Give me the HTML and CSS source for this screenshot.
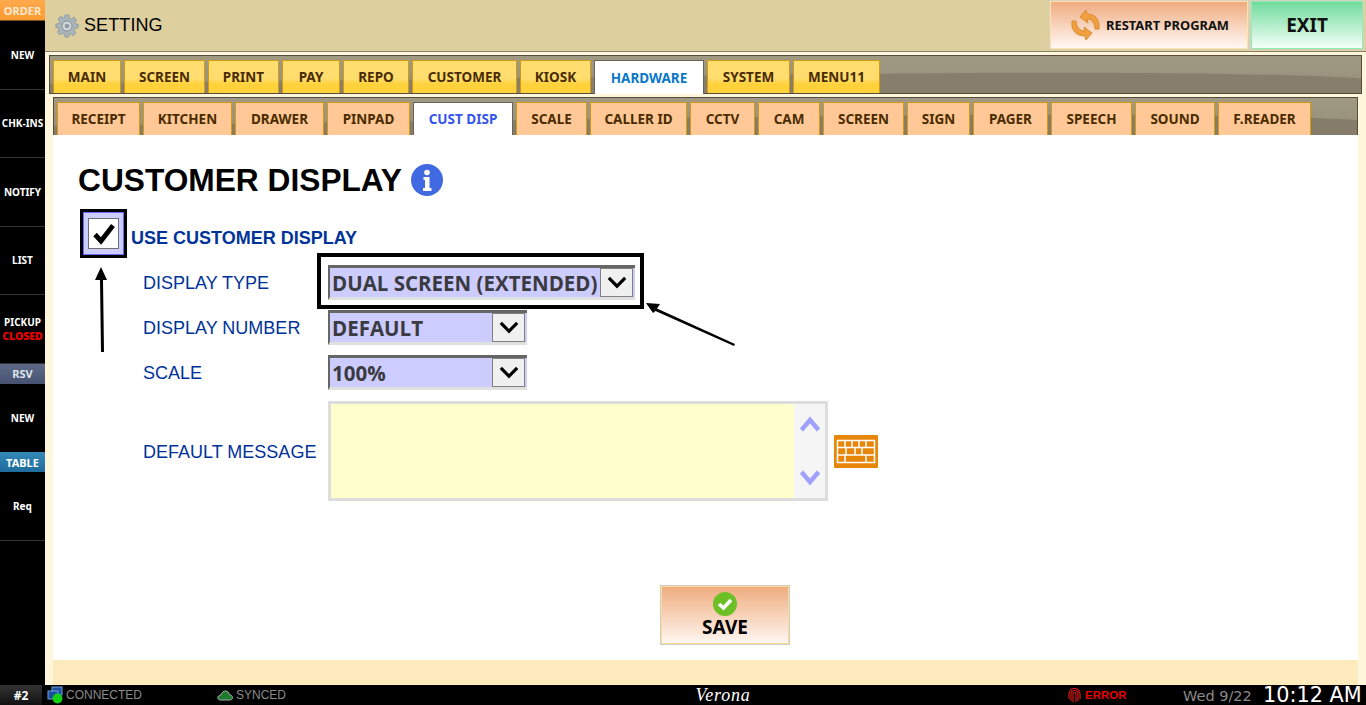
FILE: index.html
```html
<!DOCTYPE html>
<html lang="en">
<head>
<meta charset="utf-8">
<title>Setting</title>
<link rel="stylesheet" href="styles.css">
</head>
<body>
<div class="app">
  <aside class="side">
    <div class="side-head order">ORDER</div>
    <div class="side-item">NEW</div>
    <div class="side-item">CHK-INS</div>
    <div class="side-item">NOTIFY</div>
    <div class="side-item">LIST</div>
    <div class="side-item"><span>PICKUP<br><b class="closed">CLOSED</b></span></div>
    <div class="side-head rsv">RSV</div>
    <div class="side-item plain">NEW</div>
    <div class="side-head table">TABLE</div>
    <div class="side-item">Req</div>
  </aside>
  <main class="main">
    <header class="top">
      <svg class="gear" width="24" height="24" viewBox="0 0 26 26"><path fill="#a9b4bb" stroke="#8f9aa1" d="M11 1h4l.6 3.2 2.3 1 2.8-1.8 2.8 2.8-1.8 2.8 1 2.3L25 11v4l-3.2.6-1 2.3 1.8 2.8-2.8 2.8-2.8-1.8-2.300 1L15 25h-4l-.6-3.200-2.300-1-2.800 1.800-2.800-2.800 1.800-2.800-1-2.300L1 15v-4l3.200-.6 1-2.300L3.400 5.300 6.200 2.500 9 4.300l1.400-.1z"/><circle cx="13" cy="13" r="5.500" fill="#cfd6da" stroke="#7d888f"/><circle cx="13" cy="13" r="2.500" fill="#8f9aa1"/></svg>
      <h1 class="title">SETTING</h1>
      <button class="restart">
        <svg width="30" height="32" viewBox="0 0 30 32"><path fill="#f0a040" stroke="#d98a30" d="M9 8 L15 1 L16 5 C22 5 27 8 28 15 L28 20 L24 20 C24 14 21 10 16 10 L17 14z"/><path fill="#f0a040" stroke="#d98a30" d="M21 24 L15 31 L14 27 C8 27 2 24 1 17 L1 12 L5 12 C5 18 9 22 14 22 L13 18z"/></svg>
        <span>RESTART PROGRAM</span>
      </button>
      <button class="exit">EXIT</button>
    </header>
    <div class="frame">
      <nav class="tabs tabs-main">
        <svg class="wave" viewBox="0 0 1000 40" preserveAspectRatio="none"><path fill="#877f6c" d="M0 40V30C300 26 600 18 770 18C870 18 950 20 1000 24V40z"/></svg>
        <a class="tab">MAIN</a><a class="tab">SCREEN</a><a class="tab">PRINT</a><a class="tab">PAY</a><a class="tab">REPO</a><a class="tab">CUSTOMER</a><a class="tab">KIOSK</a><a class="tab on">HARDWARE</a><a class="tab">SYSTEM</a><a class="tab">MENU11</a>
      </nav>
      <div class="inner">
        <nav class="tabs tabs-sub">
          <svg class="wave" viewBox="0 0 1000 40" preserveAspectRatio="none"><path fill="#857d69" d="M0 40V30C300 26 600 18 770 18C870 18 950 20 1000 24V40z"/></svg>
          <a class="sub">RECEIPT</a><a class="sub">KITCHEN</a><a class="sub">DRAWER</a><a class="sub">PINPAD</a><a class="sub on">CUST DISP</a><a class="sub">SCALE</a><a class="sub">CALLER ID</a><a class="sub">CCTV</a><a class="sub">CAM</a><a class="sub">SCREEN</a><a class="sub">SIGN</a><a class="sub">PAGER</a><a class="sub">SPEECH</a><a class="sub">SOUND</a><a class="sub">F.READER</a>
        </nav>
        <section class="panel">
          <h2 class="heading">CUSTOMER DISPLAY
            <svg class="info" width="32" height="32" viewBox="0 0 32 32"><circle cx="16" cy="16" r="16" fill="#4169e1"/><circle cx="16" cy="8.500" r="2.800" fill="#fff"/><path fill="#fff" d="M12.500 13h6v11h2v3h-8.500v-3h2v-8h-1.500z"/></svg>
          </h2>
          <div class="use-row">
            <div class="check-frame"><div class="check-outer"><div class="check-box">
              <svg width="24" height="22" viewBox="0 0 24 22"><path fill="none" stroke="#000" stroke-width="4.800" d="M3 11.500l6 6.500L21 2.500"/></svg>
            </div></div></div>
            <span class="use-label">USE CUSTOMER DISPLAY</span>
          </div>
          <div class="field first">
            <label class="field-label">DISPLAY TYPE</label>
            <div class="select wide"><span class="select-text">DUAL SCREEN (EXTENDED)</span><span class="select-btn"><svg width="20" height="13" viewBox="0 0 22 14"><path fill="none" stroke="#000" stroke-width="3.500" d="M2 2l9 9 9-9"/></svg></span></div>
          </div>
          <div class="field">
            <label class="field-label">DISPLAY NUMBER</label>
            <div class="select"><span class="select-text">DEFAULT</span><span class="select-btn"><svg width="20" height="13" viewBox="0 0 22 14"><path fill="none" stroke="#000" stroke-width="3.500" d="M2 2l9 9 9-9"/></svg></span></div>
          </div>
          <div class="field">
            <label class="field-label">SCALE</label>
            <div class="select"><span class="select-text">100%</span><span class="select-btn"><svg width="20" height="13" viewBox="0 0 22 14"><path fill="none" stroke="#000" stroke-width="3.500" d="M2 2l9 9 9-9"/></svg></span></div>
          </div>
          <div class="field message">
            <label class="field-label">DEFAULT MESSAGE</label>
            <div class="textarea">
              <div class="text-fill"></div>
              <div class="scroll">
                <svg width="20" height="16" viewBox="0 0 20 16"><path fill="none" stroke="#a0a0ff" stroke-width="4.500" d="M1.500 14L10 4l8.500 10"/></svg>
                <svg width="20" height="16" viewBox="0 0 20 16"><path fill="none" stroke="#a0a0ff" stroke-width="4.500" d="M1.500 2L10 12l8.500-10"/></svg>
              </div>
            </div>
            <svg class="kbd" width="44" height="33" viewBox="0 0 44 33">
              <rect width="44" height="33" rx="1" fill="#e8860a"/>
              <rect x="3.500" y="5.500" width="37" height="22" fill="none" stroke="#fff" stroke-width="1.500"/>
              <path stroke="#fff" stroke-width="1.500" d="M3 12.500h38M3 20h38M11 5v7M18 5v7M25 5v7M32 5v7M12 13v7M21 13v7M28 13v7M11 20v7M32 20v7"/>
            </svg>
          </div>
          <div class="save-row">
            <button class="save">
              <svg width="24" height="24" viewBox="0 0 24 24"><circle cx="12" cy="12" r="12" fill="#6cbf24"/><path fill="none" stroke="#fff" stroke-width="3.500" d="M6 12l4.500 4L18 8"/></svg>
              <span>SAVE</span>
            </button>
          </div>
          <div class="callout"></div>
          <svg class="arrow arrow-up" width="14" height="86" viewBox="0 0 14 86"><path d="M6 0L12 13H8L9 85H6L5 13H0z" fill="#000"/></svg>
          <svg class="arrow arrow-side" width="90" height="44" viewBox="0 0 90 44"><path d="M0 0L14 1 11 5.500 89 41 88 43 9.500 8 7 10z" fill="#000"/></svg>
        </section>
        <div class="foot"></div>
      </div>
    </div>
  </main>
</div>
<footer class="status">
  <div class="num">#2</div>
  <div class="conn">
    <svg width="17" height="18" viewBox="0 0 17 18"><rect x="5" y="1" width="10" height="8" fill="#1c4f9c" stroke="#6ea0e0"/><rect x="1" y="5" width="10" height="8" fill="#1c4f9c" stroke="#6ea0e0"/><circle cx="10.500" cy="12.500" r="5" fill="#12d012"/></svg>
    <span>CONNECTED</span>
  </div>
  <div class="sync">
    <svg width="16" height="11" viewBox="0 0 16 11"><path fill="#1b7a2c" stroke="#b0b0b0" d="M3.500 10C1.500 10 .5 8.500 1 7s2-2 3-1.800C4.500 2.500 6.500 1 8.500 1s3.500 1.500 4 3.800c1.500 0 3 1 3 2.700S14 10 12.500 10z"/></svg>
    <span>SYNCED</span>
  </div>
  <div class="brand">Verona</div>
  <div class="error">
    <svg width="13" height="15" viewBox="0 0 13 15"><path fill="none" stroke="#d81818" stroke-width="1.200" d="M1 11V6a5.500 5.500 0 0 1 11 0v5M3 13V6a3.500 3.500 0 0 1 7 0v7M5 14V6a1.500 1.500 0 0 1 3 0v8"/></svg>
    <span>ERROR</span>
  </div>
  <div class="date">Wed 9/22</div>
  <div class="time">10:12 AM</div>
</footer>
</body>
</html>
```
FILE: styles.css
```css
* { box-sizing: border-box; }
html, body { margin: 0; height: 100%; }
body { width: 1366px; height: 705px; overflow: hidden; background: #000; font-family: "Liberation Sans", Arial, sans-serif; }
.app { display: flex; height: 685px; }

.side { width: 45px; flex: none; background: #000; color: #fff; font: bold 10px "Noto Sans", "Liberation Sans", sans-serif; text-align: center; }
.side-head { height: 20px; display: flex; align-items: center; justify-content: center; font-size: 11px; }
.order { height: 21px; background: linear-gradient(#ffa94d, #ff9a30); border-bottom: 1px solid #7a5020; color: #ffe9d0; }
.rsv { background: linear-gradient(#5c6a88, #465270); color: #dfe4ee; }
.table { background: linear-gradient(#3488b8, #1f6c9c); color: #fff; }
.side-item { height: 68.500px; display: flex; align-items: center; justify-content: center; border-bottom: 1px solid #333; line-height: 14px; }
.side-item.plain { border-bottom: 0; }
.closed { color: #e80000; font-size: 10.500px; }

.main { flex: 1; display: flex; flex-direction: column; min-width: 0; }
.top { height: 51px; background: #decf9f; display: flex; align-items: center; padding: 0 0 0 10px; flex: none; }
.gear { flex: none; }
.title { margin: 0 0 0 5px; font: normal 18px "Liberation Sans", sans-serif; color: #000; flex: 1; letter-spacing: .1px; }
.restart { width: 198px; height: 48px; margin-top: -1px; padding: 0 0 0 20px; border: 1px solid #ffe3a8; outline: 1px solid #d8d0c0; background: linear-gradient(#f0ac80, #fff8f4); display: flex; align-items: center; gap: 5px; font: bold 12.900px "Noto Sans", sans-serif; color: #111; }
.exit { width: 112px; height: 48px; margin: -1px 3px 0 3px; border: 1px solid #8eeeb0; outline: 1px solid #d8d0c0; background: linear-gradient(#70dc9c, #f4fff8); font: bold 19px "Noto Sans", sans-serif; color: #111; padding: 0; }

.frame { flex: 1; display: flex; flex-direction: column; background: #fff6dc; border-top: 1px solid #8a8068; padding: 3px 4px 0 4px; min-height: 0; }
.tabs { position: relative; display: grid; align-items: end; column-gap: 3px; background: linear-gradient(#a09984, #958e79); border: 1px solid #544d3c; border-bottom: 0; flex: none; }
.wave { position: absolute; inset: 0; width: 100%; height: 100%; }
.tabs-main { z-index: 1; height: 38px; padding-left: 3px; grid-template-columns: 68px 81px 71px 58px 66px 105px 71px 110px 83px 87px; }
.tab, .sub { position: relative; height: 33px; display: flex; align-items: center; justify-content: center; border: 1px solid #d59a10; border-bottom: 0; font: bold 13.500px "Noto Sans", sans-serif; color: #4a2c00; white-space: nowrap; }
.tab { background: linear-gradient(#ffdd6e 55%, #ffd23c 72%); }
.tab.on { height: 34px; margin-bottom: -1px; background: #fff; color: #0a78c8; border-color: #6a6458; }
.inner { flex: 1; display: flex; flex-direction: column; min-height: 0; padding: 3px 4px 0 4px; background: #fff6dc; border-top: 1px solid #544d3c; }
.tabs-sub { height: 38px; padding-left: 3px; grid-template-columns: 83px 89px 89px 83px 100px 71px 97px 65px 62px 81px 63px 75px 81px 80px 93px; }
.sub { background: #ffc896; }
.sub.on { background: #fff; color: #3355ee; border-color: #6a6458; }

.panel { position: relative; flex: 1; background: #fff; padding: 27px 0 0 25px; min-height: 0; }
.heading { margin: 0; height: 36px; display: flex; align-items: center; gap: 9px; font: bold 31.700px "Liberation Sans", sans-serif; color: #000; white-space: nowrap; }
.use-row { display: flex; align-items: center; gap: 4px; margin-top: 11px; padding-left: 2px; }
.check-frame { width: 47px; height: 49px; border: 3px solid #000; background: #fff; }
.check-outer { height: 100%; background: #ccccff; border: 1px solid #6a6aff; display: flex; align-items: center; justify-content: center; }
.check-box { width: 31px; height: 31px; border: 1px solid #707070; background: #fff; display: flex; align-items: center; justify-content: center; }
.use-label { padding-top: 9px; font: bold 18px "Liberation Sans", sans-serif; color: #003399; }
.field { display: flex; align-items: center; height: 35px; margin-top: 10px; padding-left: 65px; }
.field.first { margin-top: 7px; }
.field-label { width: 185px; flex: none; padding-top: 2px; font: 18px "Liberation Sans", sans-serif; color: #003399; white-space: nowrap; }
.select { width: 199px; height: 35px; display: flex; align-items: stretch; background: #ccccff; border-top: 3px solid #666; border-left: 2px solid #666; border-bottom: 3px solid #e0e0e0; padding-right: 2px; }
.select.wide { width: 307px; }
.select-text { flex: 1; padding-left: 2px; font: bold 20.500px "Open Sans", sans-serif; color: #3a3a40; line-height: 30px; white-space: nowrap; }
.select-btn { width: 33px; flex: none; background: #f0f0f0; border: 1px solid #808080; display: flex; align-items: center; justify-content: center; }
.field.message { height: 100px; margin-top: 11px; }
.textarea { width: 500px; height: 100px; display: flex; border: 3px solid #ddd; background: #ffffcc; }
.text-fill { flex: 1; }
.scroll { width: 31px; flex: none; background: #f5f5f5; display: flex; flex-direction: column; align-items: center; justify-content: space-between; padding: 12px 0 12px; }
.kbd { margin-left: 6px; flex: none; }
.save-row { padding-left: 583px; margin-top: 85px; }
.save { width: 128px; height: 58px; padding: 5px 0 0; display: flex; flex-direction: column; align-items: center; border: 1px solid #ffdc90; outline: 1px solid #ccc; background: linear-gradient(#efad80, #fff6f0); font: bold 19px "Noto Sans", sans-serif; color: #000; line-height: 23px; }
.foot { height: 25px; flex: none; background: #fdebbe; }

.callout { position: absolute; left: 264px; top: 118px; width: 327px; height: 56px; border: 4px solid #000; pointer-events: none; }
.arrow { position: absolute; }
.arrow-up { left: 42px; top: 132px; }
.arrow-side { left: 593px; top: 168px; }

.status { height: 20px; display: flex; align-items: center; background: #000; color: #8a8a8a; }
.num { width: 42px; height: 20px; background: linear-gradient(#333, #111); color: #fff; font: bold 12px "Noto Sans", sans-serif; display: flex; align-items: center; justify-content: center; flex: none; }
.conn, .sync, .error { display: flex; align-items: center; flex: none; font: 12px "Liberation Sans", sans-serif; }
.conn { margin-left: 5px; gap: 2px; width: 170px; }
.sync { gap: 3px; width: 150px; }
.brand { width: 300px; flex: none; margin-left: 206px; text-align: center; color: #fff; font: italic 18px "Liberation Serif", serif; letter-spacing: .8px; }
.error { margin-left: 195px; width: 115px; gap: 4px; color: #e80000; font-weight: bold; font-size: 11.500px; }
.date { width: 80px; flex: none; padding-top: 2px; font: 14.500px "DejaVu Sans", sans-serif; color: #8a8a8a; white-space: nowrap; }
.time { font: 20.800px "DejaVu Sans", sans-serif; color: #fff; white-space: nowrap; }
```
